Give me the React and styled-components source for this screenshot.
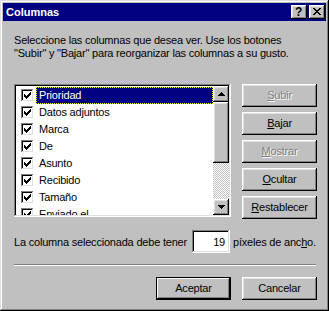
import React from 'react';
import styled, { createGlobalStyle } from 'styled-components';

const GlobalStyle = createGlobalStyle`
  html, body {
    margin: 0;
    padding: 0;
    background: #c0c0c0;
  }
  body {
    font-family: "Liberation Sans", Arial, sans-serif;
    font-size: 11px;
    letter-spacing: -0.2px;
    color: #000;
  }
`;

const raised = `
  box-shadow: inset -1px -1px #000, inset 1px 1px #fff,
    inset -2px -2px #808080, inset 2px 2px #dfdfdf;
`;

const sunken = `
  box-shadow: inset -1px -1px #fff, inset 1px 1px #808080,
    inset -2px -2px #dfdfdf, inset 2px 2px #000;
`;

const Window = styled.div`
  width: 329px;
  height: 311px;
  box-sizing: border-box;
  padding: 3px;
  background: #c0c0c0;
  box-shadow: inset -1px -1px #000, inset 1px 1px #dfdfdf,
    inset -2px -2px #808080, inset 2px 2px #fff;
  display: flex;
  flex-direction: column;
`;

const TitleBar = styled.div`
  height: 18px;
  background: #000080;
  display: flex;
  align-items: center;
  padding: 0 1px 0 3px;
`;

const Title = styled.div`
  flex: 1;
  color: #fff;
  font-weight: bold;
  font-size: 11px;
  letter-spacing: 0;
  line-height: 18px;
`;

const TitleButtons = styled.div`
  display: flex;
  gap: 2px;
`;

const TitleButton = styled.div`
  width: 16px;
  height: 14px;
  box-sizing: border-box;
  background: #c0c0c0;
  ${raised}
  display: flex;
  align-items: center;
  justify-content: center;
  font-weight: bold;
  font-size: 12px;
  line-height: 14px;
  padding: 0 1px 1px 0;
`;

const Body = styled.div`
  padding: 0 9px 0 11px;
  display: flex;
  flex-direction: column;
`;

const Intro = styled.p`
  margin: 13px 0 0;
  line-height: 13px;
  white-space: nowrap;
`;

const MainRow = styled.div`
  margin-top: 24px;
  display: flex;
  gap: 11px;
`;

const ListBox = styled.div`
  width: 217px;
  height: 133px;
  box-sizing: border-box;
  padding: 2px;
  background: #fff;
  ${sunken}
  display: flex;
`;

const Items = styled.div`
  flex: 1;
  overflow: hidden;
  padding-top: 1px;
`;

const Row = styled.div`
  height: 17px;
  display: flex;
  align-items: center;
`;

const Check = styled.span`
  width: 13px;
  height: 13px;
  box-sizing: border-box;
  margin-left: 5px;
  background: #fff;
  ${sunken}
  display: flex;
  align-items: center;
  justify-content: center;
  flex: none;
`;

const Label = styled.span`
  margin-left: 2px;
  height: 17px;
  box-sizing: border-box;
  padding: 0 2px;
  line-height: 15px;
  border: 1px dotted ${p => (p.$selected ? '#ffff00' : 'transparent')};
  background: ${p => (p.$selected ? '#000080' : 'transparent')};
  color: ${p => (p.$selected ? '#fff' : '#000')};
  flex: ${p => (p.$selected ? 1 : 'none')};
  white-space: nowrap;
`;

const ScrollBar = styled.div`
  width: 16px;
  display: flex;
  flex-direction: column;
`;

const ArrowButton = styled.div`
  width: 16px;
  height: 16px;
  box-sizing: border-box;
  background: #c0c0c0;
  ${raised}
  display: flex;
  align-items: center;
  justify-content: center;
  flex: none;
`;

const Thumb = styled.div`
  height: 61px;
  background: #c0c0c0;
  ${raised}
  flex: none;
`;

const Track = styled.div`
  flex: 1;
  background-image: conic-gradient(#fff 25%, #c0c0c0 0 50%, #fff 0 75%, #c0c0c0 0);
  background-size: 2px 2px;
`;

const SideButtons = styled.div`
  display: flex;
  flex-direction: column;
  gap: 5px;
`;

const Button = styled.div`
  width: 75px;
  height: 23px;
  box-sizing: border-box;
  background: #c0c0c0;
  ${p =>
    p.$default
      ? `box-shadow: inset 0 0 0 1px #000, inset -2px -2px #000, inset 2px 2px #fff, inset -3px -3px #808080;`
      : raised}
  display: flex;
  align-items: center;
  justify-content: center;
  padding-bottom: 1px;
  white-space: nowrap;
  color: ${p => (p.$disabled ? '#808080' : '#000')};
  text-shadow: ${p => (p.$disabled ? '1px 1px #fff' : 'none')};
`;

const WidthRow = styled.div`
  margin-top: 11px;
  height: 23px;
  display: flex;
  align-items: center;
  white-space: nowrap;
`;

const WidthInput = styled.div`
  width: 38px;
  height: 23px;
  box-sizing: border-box;
  margin: 0 3px 0 5px;
  padding: 0 5px;
  background: #fff;
  ${sunken}
  display: flex;
  align-items: center;
  justify-content: flex-end;
  flex: none;
`;

const Separator = styled.div`
  margin-top: 11px;
  width: 302px;
  height: 1px;
  background: #808080;
  border-bottom: 1px solid #fff;
`;

const Footer = styled.div`
  margin-top: 11px;
  display: flex;
  justify-content: flex-end;
  gap: 11px;
`;

const items = [
  'Prioridad',
  'Datos adjuntos',
  'Marca',
  'De',
  'Asunto',
  'Recibido',
  'Tamaño',
  'Enviado el',
];

const CheckMark = () => (
  <svg width="7" height="7" viewBox="0 0 7 7" shapeRendering="crispEdges">
    <path
      fill="#000"
      d="M6 0h1v3h-1zM5 1h1v3h-1zM4 2h1v3h-1zM0 2h1v3h-1zM1 3h1v3h-1zM2 4h1v3h-1zM3 3h1v3h-1z"
    />
  </svg>
);

const ArrowUp = () => (
  <svg width="7" height="4" viewBox="0 0 7 4" shapeRendering="crispEdges">
    <path fill="#000" d="M3 0h1v1h-1zM2 1h3v1h-3zM1 2h5v1h-5zM0 3h7v1h-7z" />
  </svg>
);

const ArrowDown = () => (
  <svg width="7" height="4" viewBox="0 0 7 4" shapeRendering="crispEdges">
    <path fill="#000" d="M0 0h7v1h-7zM1 1h5v1h-5zM2 2h3v1h-3zM3 3h1v1h-1z" />
  </svg>
);

const CloseGlyph = () => (
  <svg width="8" height="7" viewBox="0 0 8 7" shapeRendering="crispEdges">
    <path
      fill="#000"
      d="M0 0h2v1h-2zM6 0h2v1h-2zM1 1h2v1h-2zM5 1h2v1h-2zM2 2h4v1h-4zM3 3h2v1h-2zM2 4h4v1h-4zM1 5h2v1h-2zM5 5h2v1h-2zM0 6h2v1h-2zM6 6h2v1h-2z"
    />
  </svg>
);

export default function App() {
  return (
    <>
      <GlobalStyle />
      <Window>
        <TitleBar>
          <Title>Columnas</Title>
          <TitleButtons>
            <TitleButton>?</TitleButton>
            <TitleButton>
              <CloseGlyph />
            </TitleButton>
          </TitleButtons>
        </TitleBar>
        <Body>
          <Intro>
            Seleccione las columnas que desea ver. Use los botones
            <br />
            "Subir" y "Bajar" para reorganizar las columnas a su gusto.
          </Intro>
          <MainRow>
            <ListBox>
              <Items>
                {items.map((item, idx) => (
                  <Row key={item}>
                    <Check>
                      <CheckMark />
                    </Check>
                    <Label $selected={idx === 0}>{item}</Label>
                  </Row>
                ))}
              </Items>
              <ScrollBar>
                <ArrowButton>
                  <ArrowUp />
                </ArrowButton>
                <Thumb />
                <Track />
                <ArrowButton>
                  <ArrowDown />
                </ArrowButton>
              </ScrollBar>
            </ListBox>
            <SideButtons>
              <Button $disabled>
                <span><u>S</u>ubir</span>
              </Button>
              <Button>
                <span><u>B</u>ajar</span>
              </Button>
              <Button $disabled>
                <span><u>M</u>ostrar</span>
              </Button>
              <Button>
                <span><u>O</u>cultar</span>
              </Button>
              <Button>
                <span><u>R</u>establecer</span>
              </Button>
            </SideButtons>
          </MainRow>
          <WidthRow>
            <span>La columna seleccionada debe tener</span>
            <WidthInput>19</WidthInput>
            <span>
              píxeles de anc<u>h</u>o.
            </span>
          </WidthRow>
          <Separator />
          <Footer>
            <Button $default>Aceptar</Button>
            <Button>Cancelar</Button>
          </Footer>
        </Body>
      </Window>
    </>
  );
}
